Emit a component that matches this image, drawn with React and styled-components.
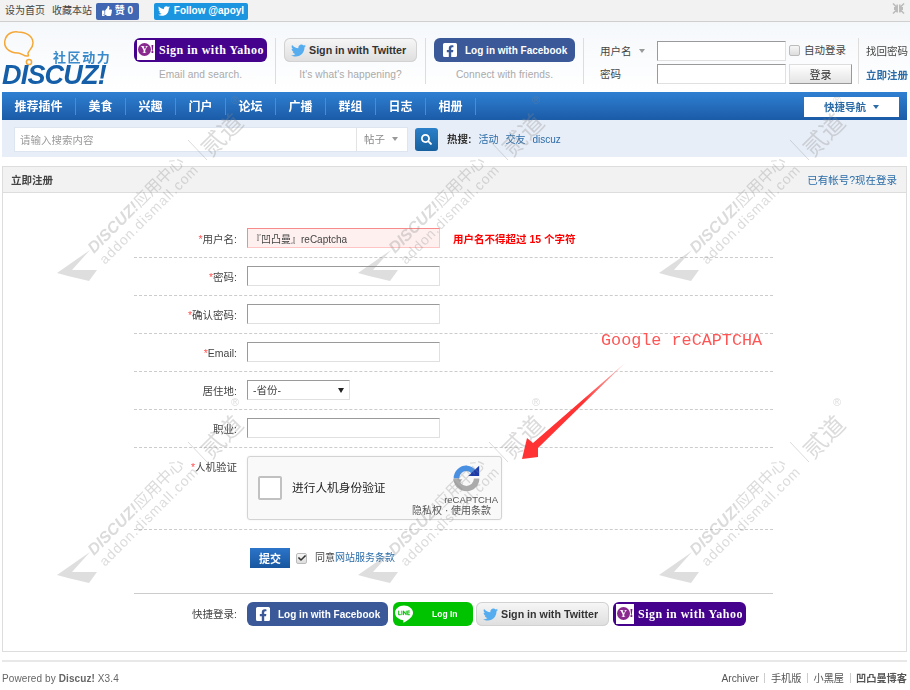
import React from 'react'
import styled, { createGlobalStyle, css } from 'styled-components'
import { FaFacebookSquare, FaTwitter, FaThumbsUp, FaSearch, FaCheck } from 'react-icons/fa'
import { SiLine } from 'react-icons/si'

const sans = `"Liberation Sans", "Noto Sans CJK SC", sans-serif`

const GlobalStyle = createGlobalStyle`
  html, body { margin: 0; padding: 0; background: #fff; }
  body { font: 10.5px/1.4 ${sans}; color: #444; width: 910px; height: 690px; overflow: hidden; }
  a { color: inherit; text-decoration: none; }
  * { box-sizing: border-box; }
`

const Page = styled.div`
  position: relative;
  width: 910px;
  height: 690px;
  overflow: hidden;
  filter: blur(0.35px);
`

/* top strip */
const TopBar = styled.div`
  height: 22px;
  background: #f2f2f2;
  border-bottom: 1px solid #cfcfcf;
  display: flex;
  align-items: center;
  padding: 1px 5px 0;
  font-size: 10px;
  color: #444;
`
const TopLink = styled.a`
  margin-right: 7px;
`
const LikeBadge = styled.a`
  width: 43px;
  height: 17px;
  margin: 0 15px 0 -3px;
  border-radius: 2px;
  background: #4267b2;
  color: #fff;
  font-weight: bold;
  font-size: 10px;
  display: flex;
  align-items: center;
  justify-content: center;
  gap: 3px;
`
const FollowBadge = styled.a`
  width: 94px;
  height: 17px;
  border-radius: 2px;
  background: #1b95e0;
  color: #fff;
  font-weight: bold;
  font-size: 10px;
  display: flex;
  align-items: center;
  justify-content: center;
  gap: 4px;
`
const Collapse = styled.svg`
  margin-left: auto;
  margin-top: -5px;
`

/* header */
const Masthead = styled.div`
  height: 70px;
  padding-top: 16px;
  padding-left: 2px;
  display: flex;
  background: linear-gradient(#f5f8fb, #fff);
`
const Logo = styled.a`
  position: relative;
  display: block;
  flex: none;
  width: 132px;
  height: 56px;
  margin-top: -8px;
`
const LogoBubble = styled.svg`
  position: absolute;
  left: 2px;
  top: 0;
`
const LogoSlogan = styled.span`
  position: absolute;
  left: 51px;
  top: 21px;
  color: #3a8bcb;
  font-size: 13px;
  line-height: 13px;
  font-weight: bold;
  letter-spacing: 1.6px;
`
const LogoWord = styled.span`
  position: absolute;
  left: 0;
  top: 34px;
  font: italic bold 27px/22px ${sans};
  color: #155fa8;
  letter-spacing: -0.8px;
`
const SocialCol = styled.div`
  flex: none;
  display: flex;
  flex-direction: column;
  align-items: center;
  padding-right: 8px;
  margin-right: 8px;
  border-right: 1px solid #ddd;
  height: 46px;
`
const Caption = styled.span`
  margin-top: 6px;
  color: #aaa;
  font-size: 10.2px;
  letter-spacing: 0.1px;
`

const kinds = {
  facebook: css`
    width: 141px;
    padding-left: 8px;
    gap: 7px;
    background: #3b5998;
    color: #fff;
    font: bold 10px ${sans};
  `,
  line: css`
    width: 80px;
    margin: 0 -1px 0 1px;
    padding-left: 2px;
    gap: 19px;
    background: #00c300;
    color: #fff;
    font: bold 8.5px ${sans};
  `,
  twitter: css`
    width: 133px;
    padding-left: 7px;
    gap: 3px;
    background: linear-gradient(#f7f7f7, #dedede);
    box-shadow: inset 0 0 0 1px #d2d2d2;
    color: #333;
    font: bold 10.7px ${sans};
  `,
  yahoo: css`
    width: 133px;
    padding-left: 3px;
    gap: 4px;
    background: #45028c;
    color: #fff;
    font: bold 12px "Liberation Serif", serif;
    letter-spacing: 0.5px;
  `,
}
const SocialButton = styled.a`
  flex: none;
  display: flex;
  align-items: center;
  height: 24px;
  border-radius: 6px;
  white-space: nowrap;
  ${(p) => kinds[p.$kind]}
`
const YahooBadge = styled.span`
  position: relative;
  width: 18px;
  height: 20px;
  background: #fff;
  color: #7b1b86;
  flex: none;
`
const YahooY = styled.span`
  position: absolute;
  left: 1px;
  top: 3px;
  width: 13px;
  height: 13px;
  border-radius: 50%;
  background: #8a2a8f;
  color: #fff;
  font: bold 10px/13px "Liberation Serif", serif;
  text-align: center;
`
const YahooMark = styled.span`
  position: absolute;
  right: 0;
  top: 1px;
  font: bold 13px/16px "Liberation Serif", serif;
`

const LoginArea = styled.div`
  flex: none;
  display: grid;
  grid-template-columns: 54px 129px auto;
  grid-auto-rows: 23px;
  column-gap: 3px;
  width: 273px;
  margin-top: 1px;
  margin-left: -7px;
  padding-left: 15px;
  align-items: center;
`
const LoginLabel = styled.span`
  padding-top: 2px;
`
const Caret = styled.i`
  display: inline-block;
  margin-left: 7px;
  vertical-align: 2px;
  border: 3px solid transparent;
  border-top: 4px solid ${(p) => p.$color || '#999'};
  border-bottom: 0;
`
const TextBox = styled.input`
  display: block;
  width: ${(p) => p.$w || 193}px;
  height: 20px;
  padding: 0 ${(p) => (p.$error ? 3 : 6)}px;
  font: ${(p) => (p.$error ? 10 : 10.5)}px ${sans};
  color: #444;
  background: ${(p) => (p.$error ? '#fff0f0' : '#fff')};
  border: 1px solid;
  border-color: ${(p) => (p.$error ? '#f78a8a #ffc4c4 #ffc4c4 #f78a8a' : '#9a9a9a #e0e0e0 #e0e0e0 #9a9a9a')};
  outline: none;
`
const AutoLogin = styled.label`
  display: flex;
  align-items: center;
  gap: 4px;
  white-space: nowrap;
`
const MiniBox = styled.span`
  display: flex;
  align-items: center;
  justify-content: center;
  width: 11px;
  height: 11px;
  border: 1px solid #bbb;
  border-radius: 2px;
  background: linear-gradient(#f6f6f6, #ddd);
  color: #333;
  font-size: 8px;
`
const LoginBtn = styled.button`
  width: 63px;
  height: 20px;
  padding: 0;
  font: 11px ${sans};
  color: #333;
  background: linear-gradient(#fff, #e4e4e4);
  border: 1px solid;
  border-color: #ddd #999 #999 #ddd;
`
const SideLinks = styled.div`
  flex: none;
  width: 52px;
  padding-left: 7px;
  border-left: 1px solid #ddd;
  height: 46px;
  display: flex;
  flex-direction: column;
  gap: 9px;
  padding-top: 6px;
  white-space: nowrap;
`
const RegLink = styled.a`
  color: #2b6ca8;
  font-weight: bold;
`

/* nav */
const Main = styled.div`
  margin: 0 3px 0 2px;
`
const NavBar = styled.div`
  height: 28px;
  display: flex;
  align-items: center;
  justify-content: space-between;
  background: linear-gradient(#2f80d2, #1b5ba7);
  padding: 1px 8px 0 0;
`
const NavList = styled.div`
  display: flex;
  align-items: center;
`
const NavItem = styled.a`
  flex: none;
  width: ${(p) => (p.$first ? 74 : 50)}px;
  height: 17px;
  text-align: center;
  color: #fff;
  font: bold 12px/19px ${sans};
  border-right: 1px solid #4b8cc9;
`
const QuickNav = styled.a`
  width: 95px;
  height: 20px;
  margin-top: 1px;
  background: #fff;
  color: #2b6ca8;
  font: bold 10.5px/20px ${sans};
  text-align: center;
`

/* search */
const SearchBar = styled.div`
  height: 37px;
  background: #e8eef7;
  padding: 2px 0 0 12px;
  display: flex;
  align-items: center;
`
const SearchBox = styled.div`
  width: 394px;
  height: 25px;
  display: flex;
  background: #fff;
  border: 1px solid #dde5f0;
`
const SearchInput = styled.input`
  flex: 1;
  min-width: 0;
  border: 0;
  outline: none;
  padding: 0 5px;
  background: transparent;
  font: 10.5px ${sans};
  &::placeholder { color: #999; opacity: 1; }
`
const SearchType = styled.span`
  width: 51px;
  border-left: 1px solid #e3e3e3;
  color: #888;
  font-size: 10.5px;
  line-height: 23px;
  padding-left: 7px;
`
const SearchBtn = styled.button`
  width: 23px;
  height: 23px;
  margin: 0 9px 0 7px;
  padding: 0;
  border: 0;
  border-radius: 3px;
  background: linear-gradient(#2b80c8, #17609f);
  color: #fff;
  font-size: 11px;
  display: flex;
  align-items: center;
  justify-content: center;
`
const HotLabel = styled.strong`
  color: #333;
  margin-right: 7px;
`
const HotLink = styled.a`
  color: #2b6ca8;
  margin-right: 7px;
  font-size: 10px;
`

/* panel */
const Panel = styled.div`
  margin-top: 9px;
  height: 486px;
  border: 1px solid #ddd;
`
const PanelHead = styled.div`
  height: 26px;
  background: #f2f2f2;
  border-bottom: 1px solid #ddd;
  display: flex;
  align-items: center;
  justify-content: space-between;
  padding: 2px 9px 0 8px;
`
const PanelTitle = styled.strong`
  font-size: 10.5px;
  color: #444;
`
const PanelLink = styled.a`
  color: #2b6ca8;
  font-size: 10.5px;
`
const PanelBody = styled.div`
  width: 639px;
  margin-left: 131px;
  padding-top: 27px;
`
const FormRow = styled.div`
  display: flex;
  align-items: flex-start;
  padding: 8px 0 9px;
  border-bottom: 1px dashed #ccc;
`
const FieldLabel = styled.label`
  flex: none;
  width: 103px;
  height: 20px;
  margin-right: 10px;
  padding-top: 1px;
  text-align: right;
  line-height: 20px;
  color: #444;
  em { color: #f55; font-style: normal; }
`
const ErrorTip = styled.span`
  margin-left: 13px;
  height: 20px;
  color: #f00;
  font-weight: bold;
  line-height: 22px;
`
const SelectBox = styled.div`
  width: 103px;
  height: 20px;
  padding: 0 5px;
  display: flex;
  align-items: center;
  justify-content: space-between;
  border: 1px solid;
  border-color: #9a9a9a #e0e0e0 #e0e0e0 #9a9a9a;
  color: #444;
`
const SelectArrow = styled.i`
  border: 3.5px solid transparent;
  border-top: 5px solid #222;
  border-bottom: 0;
`

/* captcha */
const Captcha = styled.div`
  width: 255px;
  height: 64px;
  display: flex;
  background: #f9f9f9;
  border: 1px solid #d3d3d3;
  border-radius: 3px;
  box-shadow: 0 0 2px rgba(0, 0, 0, 0.08);
`
const CaptchaLeft = styled.div`
  flex: 1;
  display: flex;
  align-items: center;
  gap: 10px;
  padding-left: 10px;
  color: #222;
  font-size: 11.7px;
`
const CaptchaCheck = styled.span`
  width: 24px;
  height: 24px;
  background: #fff;
  border: 2px solid #c1c1c1;
  border-radius: 2px;
`
const CaptchaRight = styled.div`
  width: 90px;
  display: flex;
  flex-direction: column;
  align-items: flex-end;
  padding: 8px 3px 0 0;
  color: #555;
`
const CaptchaName = styled.span`
  font-size: 9.5px;
  line-height: 11px;
  margin-top: 2px;
`
const CaptchaTerms = styled.span`
  font-size: 10px;
  line-height: 12px;
  margin-right: 7px;
  white-space: nowrap;
`

const SubmitRow = styled.div`
  display: flex;
  align-items: center;
  padding: 18px 0 25px 116px;
`
const SubmitBtn = styled.button`
  width: 40px;
  height: 20px;
  padding: 0;
  margin-right: 6px;
  border: 0;
  background: linear-gradient(#2c75c9, #18579f);
  color: #fff;
  font: bold 11px ${sans};
`
const Agree = styled.span`
  margin-left: 8px;
  font-size: 10px;
  a { color: #2b6ca8; }
`
const QuickRow = styled.div`
  display: flex;
  align-items: center;
  gap: 4px;
  padding-top: 8px;
  border-top: 1px solid #ccc;
`
const QuickLabel = styled.span`
  width: 103px;
  margin-right: 6px;
  text-align: right;
`

/* footer */
const Footer = styled.div`
  margin-top: 8px;
  border-top: 2px solid #e8e8e8;
  padding-top: 10px;
  display: flex;
  justify-content: space-between;
  font-size: 10px;
  letter-spacing: 0.1px;
  color: #666;
`
const FooterLinks = styled.div`
  display: flex;
  align-items: center;
  font-size: 10.2px;
  letter-spacing: 0;
  color: #555;
`
const FooterLink = styled.a`
  font-weight: ${(p) => (p.$bold ? 'bold' : 'normal')};
  &:not(:first-child)::before {
    content: '';
    display: inline-block;
    width: 1px;
    height: 10px;
    margin: 0 5.5px;
    vertical-align: -1px;
    background: #ccc;
  }
`

/* watermark + annotation lie over the page */
const WatermarkLayer = styled.div`
  position: absolute;
  left: 50px;
  top: 90px;
  display: grid;
  grid-template-columns: repeat(3, 301px);
  grid-auto-rows: 302px;
  pointer-events: none;
`
const TileText = styled.text`
  fill: #888;
  fill-opacity: 0.3;
  font-family: ${sans};
`
const Annotation = styled.div`
  position: absolute;
  left: 601px;
  top: 331px;
  color: #ff5555;
  font: 16.8px/20px "Liberation Mono", monospace;
`
const AnnotationArrow = styled.svg`
  position: absolute;
  left: 520px;
  top: 360px;
`

const Tile = () => (
  <svg width="210" height="200" viewBox="0 0 210 200">
    <polygon points="7,183 40,160 22,180 47,180 39,191 18,186" fill="#888" fillOpacity=".28" />
    <TileText transform="translate(44 164) rotate(-45)" fontSize="16">
      <tspan fontStyle="italic" fontWeight="bold">DISCUZ!</tspan>应用中心
    </TileText>
    <TileText transform="translate(55 175) rotate(-45)" fontSize="14" letterSpacing="1">
      addon.dismall.com
    </TileText>
    <line x1="138" y1="50" x2="157" y2="70" stroke="#888" strokeOpacity=".3" />
    <TileText transform="translate(161 68) rotate(-45)" fontSize="24">贰道</TileText>
    <TileText x="181" y="14" fontSize="11">®</TileText>
  </svg>
)

const YahooButton = () => (
  <SocialButton $kind="yahoo">
    <YahooBadge><YahooY>Y</YahooY><YahooMark>!</YahooMark></YahooBadge>
    Sign in with Yahoo
  </SocialButton>
)
const TwitterButton = () => (
  <SocialButton $kind="twitter">
    <FaTwitter size={15} color="#55acee" />
    Sign in with Twitter
  </SocialButton>
)
const FacebookButton = () => (
  <SocialButton $kind="facebook">
    <FaFacebookSquare size={16} />
    Log in with Facebook
  </SocialButton>
)

const navItems = ['美食', '兴趣', '门户', '论坛', '广播', '群组', '日志', '相册']
const fields = ['密码', '确认密码', 'Email']

const RecaptchaLogo = () => (
  <svg width="27" height="27" viewBox="0 0 64 64" style={{ marginRight: 18 }}>
    <path d="M8 32 A24 24 0 0 1 34 8" fill="none" stroke="#4a90e2" strokeWidth="13" />
    <path d="M30 8 A24 24 0 0 1 50 18" fill="none" stroke="#4a90e2" strokeWidth="13" />
    <polygon points="36,26 62,26 62,2" fill="#1c3aa9" />
    <path d="M56 32 A24 24 0 0 1 8 32" fill="none" stroke="#ababab" strokeWidth="13" />
    <polygon points="0,34 22,34 8,52" fill="#ababab" />
  </svg>
)

export default function App() {
  return (
    <Page>
      <GlobalStyle />
      <TopBar>
        <TopLink href="#">设为首页</TopLink>
        <TopLink href="#">收藏本站</TopLink>
        <LikeBadge href="#"><FaThumbsUp size={10} /> 赞 0</LikeBadge>
        <FollowBadge href="#"><FaTwitter size={12} /> Follow @apoyl</FollowBadge>
        <Collapse width="13" height="11" viewBox="0 0 13 11" fill="none" stroke="#bbb" strokeWidth="1.5">
          <path d="M1 0.5 L5 4.5 M2 4.7 H5.2 V1.5 M12 0.5 L8 4.5 M11 4.7 H7.8 V1.5 M1 10.5 L5 6.5 M2 6.3 H5.2 V9.5 M12 10.5 L8 6.5 M11 6.3 H7.8 V9.5" />
        </Collapse>
      </TopBar>

      <Masthead>
        <Logo href="#">
          <LogoBubble width="34" height="36" viewBox="0 0 34 36" fill="none" stroke="#f5a83a" strokeWidth="1.5">
            <path d="M8 22 C3 20 0 16 0.8 11 C2 4 8 1 14 2 C22 2 29 6 29 13 C29 18 25 20 24 23 C24 25 25 26 24 26 C20 27 18 23 14 23 C12 23 10 23 8 22 Z" />
            <circle cx="25" cy="32" r="2.6" />
          </LogoBubble>
          <LogoSlogan>社区动力</LogoSlogan>
          <LogoWord>DISCUZ!</LogoWord>
        </Logo>
        <SocialCol>
          <YahooButton />
          <Caption>Email and search.</Caption>
        </SocialCol>
        <SocialCol>
          <TwitterButton />
          <Caption>It's what's happening?</Caption>
        </SocialCol>
        <SocialCol>
          <FacebookButton />
          <Caption>Connect with friends.</Caption>
        </SocialCol>
        <LoginArea>
          <LoginLabel>用户名<Caret /></LoginLabel>
          <TextBox $w={129} readOnly />
          <AutoLogin><MiniBox />自动登录</AutoLogin>
          <LoginLabel>密码</LoginLabel>
          <TextBox $w={129} readOnly />
          <LoginBtn>登录</LoginBtn>
        </LoginArea>
        <SideLinks>
          <a href="#">找回密码</a>
          <RegLink href="#">立即注册</RegLink>
        </SideLinks>
      </Masthead>

      <Main>
        <NavBar>
          <NavList>
            <NavItem $first href="#">推荐插件</NavItem>
            {navItems.map((item) => (
              <NavItem key={item} href="#">{item}</NavItem>
            ))}
          </NavList>
          <QuickNav href="#">快捷导航<Caret $color="#2b6ca8" /></QuickNav>
        </NavBar>

        <SearchBar>
          <SearchBox>
            <SearchInput placeholder="请输入搜索内容" />
            <SearchType>帖子<Caret /></SearchType>
          </SearchBox>
          <SearchBtn><FaSearch /></SearchBtn>
          <HotLabel>热搜:</HotLabel>
          <HotLink href="#">活动</HotLink>
          <HotLink href="#">交友</HotLink>
          <HotLink href="#">discuz</HotLink>
        </SearchBar>

        <Panel>
          <PanelHead>
            <PanelTitle>立即注册</PanelTitle>
            <PanelLink href="#">已有帐号?现在登录</PanelLink>
          </PanelHead>
          <PanelBody>
            <FormRow>
              <FieldLabel><em>*</em>用户名:</FieldLabel>
              <TextBox $error defaultValue="『凹凸曼』reCaptcha" />
              <ErrorTip>用户名不得超过 15 个字符</ErrorTip>
            </FormRow>
            {fields.map((label) => (
              <FormRow key={label}>
                <FieldLabel><em>*</em>{label}:</FieldLabel>
                <TextBox readOnly />
              </FormRow>
            ))}
            <FormRow>
              <FieldLabel>居住地:</FieldLabel>
              <SelectBox>-省份-<SelectArrow /></SelectBox>
            </FormRow>
            <FormRow>
              <FieldLabel>职业:</FieldLabel>
              <TextBox readOnly />
            </FormRow>
            <FormRow>
              <FieldLabel><em>*</em>人机验证</FieldLabel>
              <Captcha>
                <CaptchaLeft>
                  <CaptchaCheck />
                  进行人机身份验证
                </CaptchaLeft>
                <CaptchaRight>
                  <RecaptchaLogo />
                  <CaptchaName>reCAPTCHA</CaptchaName>
                  <CaptchaTerms>隐私权 · 使用条款</CaptchaTerms>
                </CaptchaRight>
              </Captcha>
            </FormRow>
            <SubmitRow>
              <SubmitBtn>提交</SubmitBtn>
              <MiniBox><FaCheck /></MiniBox>
              <Agree>同意<a href="#">网站服务条款</a></Agree>
            </SubmitRow>
            <QuickRow>
              <QuickLabel>快捷登录:</QuickLabel>
              <FacebookButton />
              <SocialButton $kind="line"><SiLine size={18} />Log In</SocialButton>
              <TwitterButton />
              <YahooButton />
            </QuickRow>
          </PanelBody>
        </Panel>

        <Footer>
          <span>Powered by <strong>Discuz!</strong> X3.4</span>
          <FooterLinks>
            <FooterLink href="#">Archiver</FooterLink>
            <FooterLink href="#">手机版</FooterLink>
            <FooterLink href="#">小黑屋</FooterLink>
            <FooterLink $bold href="#">凹凸曼博客</FooterLink>
          </FooterLinks>
        </Footer>
      </Main>

      <WatermarkLayer>
        {[0, 1, 2, 3, 4, 5].map((i) => <Tile key={i} />)}
      </WatermarkLayer>
      <Annotation>Google reCAPTCHA</Annotation>
      <AnnotationArrow width="110" height="104" viewBox="0 0 110 104">
        <defs>
          <linearGradient id="tail" x1="0" y1="1" x2="1" y2="0">
            <stop offset="0.6" stopColor="#ff3333" />
            <stop offset="1" stopColor="#ffc9c9" />
          </linearGradient>
        </defs>
        <polygon points="105,3 13,83 7,78 2,99 18,97 18,88" fill="url(#tail)" />
      </AnnotationArrow>
    </Page>
  )
}
